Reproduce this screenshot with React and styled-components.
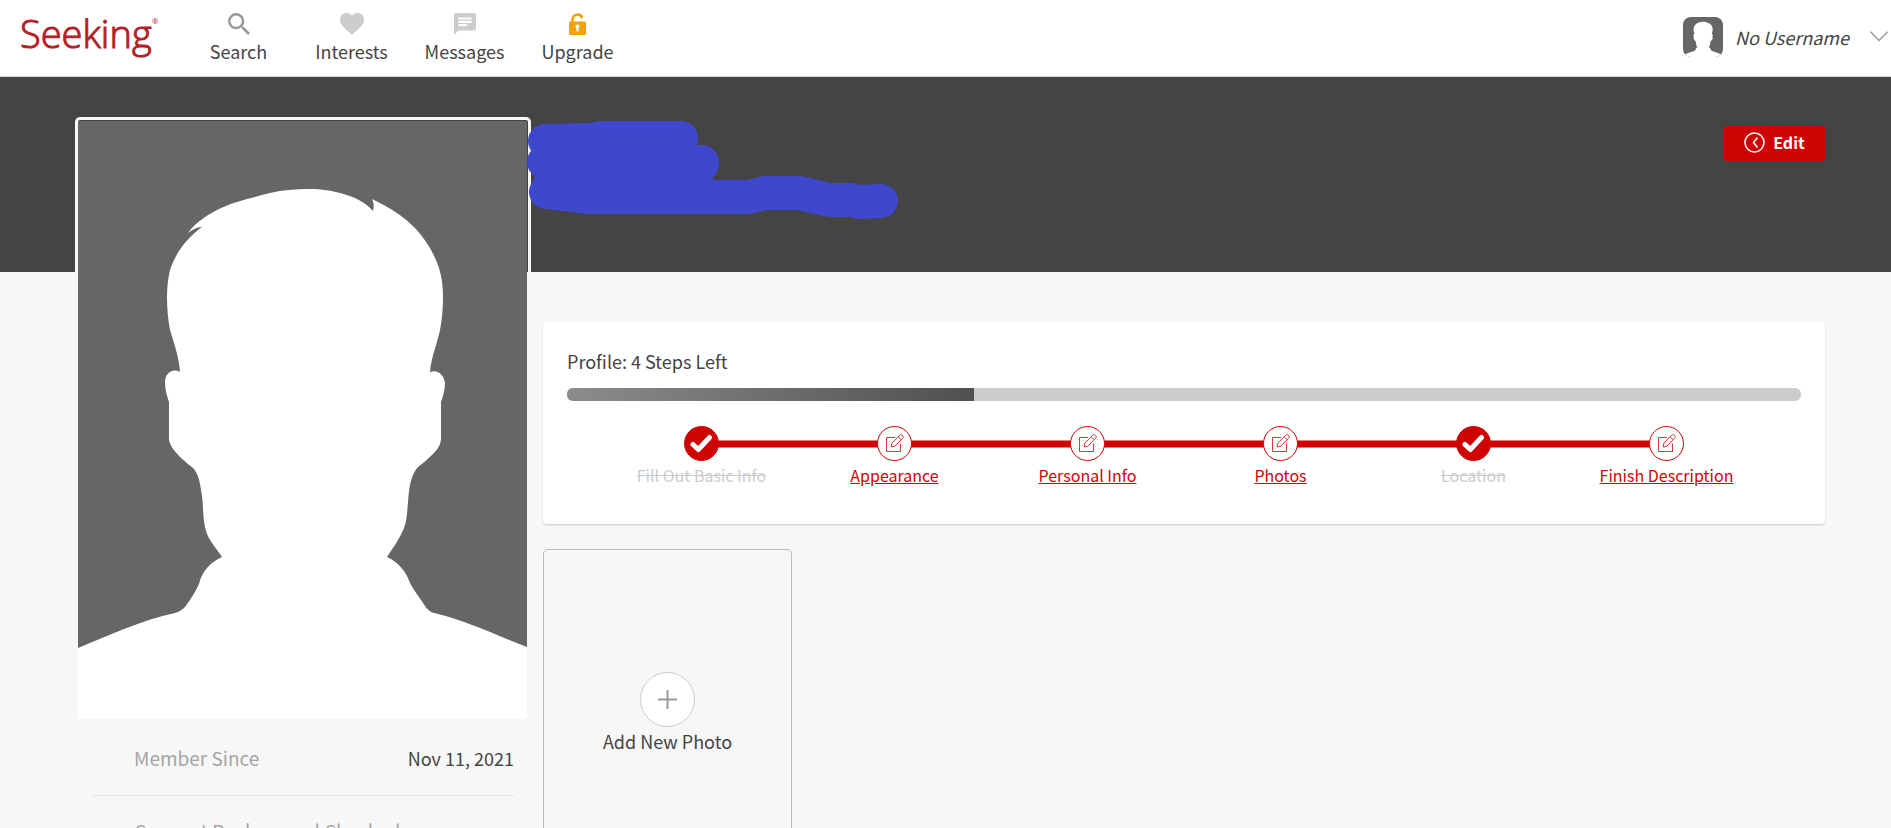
import styled, { createGlobalStyle, css } from "styled-components";

const GlobalStyle = createGlobalStyle`
  * {
    box-sizing: border-box;
  }
  body {
    margin: 0;
    background-color: #f7f7f7;
    color: #444;
    font-family: "Noto Sans CJK SC", sans-serif;
    font-size: 18px;
    line-height: 24px;
  }
`;

const StyledHeader = styled.header`
  display: flex;
  align-items: center;
  height: 77px;
  padding: 0 3px 0 20px;
  background-color: #fff;
  border-bottom: 1px solid #d4d8d8;
`;

const Logo = styled.a`
  display: flex;
  align-items: flex-start;
  width: 162px;
  padding-bottom: 10px;
  color: #b32025;
  font-family: "Open Sans", sans-serif;
  font-size: 38px;
  font-weight: 300;
  line-height: 56px;
  text-decoration: none;
  -webkit-text-stroke: 1px #b32025;
`;

const Registered = styled.span`
  font-size: 8px;
  font-weight: 400;
  line-height: 16px;
  padding-top: 8px;
  -webkit-text-stroke: 0;
`;

const StyledNav = styled.nav`
  display: flex;
`;

const NavLink = styled.a`
  display: flex;
  flex-direction: column;
  align-items: center;
  gap: 4px;
  width: 113px;
  color: #444;
  text-decoration: none;
`;

const UserLink = styled.a`
  display: flex;
  align-items: center;
  gap: 12px;
  margin-left: auto;
  padding-bottom: 3px;
  color: #444;
  font-style: italic;
  text-decoration: none;
`;

const UserAvatar = styled.span`
  display: flex;
  width: 40px;
  height: 40px;
  border-radius: 8px;
  overflow: hidden;
`;

const UserChevron = styled.span`
  display: flex;
  margin-left: 9px;
`;

const Banner = styled.section`
  display: flex;
  align-items: flex-start;
  justify-content: space-between;
  height: 195px;
  padding: 49px 66px 0 543px;
  background-color: #444;
`;

const ProfileName = styled.div`
  position: relative;
`;

const NameCover = styled.svg`
  position: absolute;
  z-index: 2;
  top: -6px;
  left: -17px;
`;

const EditButton = styled.button`
  display: flex;
  align-items: center;
  justify-content: center;
  gap: 8px;
  width: 101px;
  height: 35px;
  padding: 0 0 3px;
  border: 0;
  border-radius: 2px;
  background-color: #ce0404;
  color: #fff;
  font-family: inherit;
  font-size: 16px;
  font-weight: 700;
  line-height: 24px;
`;

const Main = styled.main`
  display: grid;
  grid-template-columns: 456px minmax(0, 1fr);
  gap: 12px;
  padding: 0 66px 0 75px;
`;

const Sidebar = styled.aside`
  position: relative;
  margin-top: -155px;
`;

const PhotoFrame = styled.div`
  border: 3px solid #f7f7f7;
  border-radius: 5px;
  padding: 1px 1px 0 0;

  svg {
    display: block;
    width: 100%;
  }
`;

const Facts = styled.table`
  width: 426px;
  margin: 1px 0 0 15px;
  border-spacing: 2px;
`;

const FactCell = styled.td`
  height: 71px;
  padding: 0 0 4px;
  border-bottom: 1px solid #e5e5e5;
  text-align: right;
  width: ${(props) => props.$width};
`;

const FactLabel = styled.th`
  padding: 0 0 4px;
  border-bottom: 1px solid #e5e5e5;
  color: #a5a5a5;
  font-size: 19px;
  font-weight: 400;
  text-align: left;
`;

const Content = styled.div`
  padding-top: 50px;
`;

const ProgressCard = styled.section`
  padding: 27px 24px 37px;
  background-color: #fff;
  border-radius: 4px;
  box-shadow: 0 1px 2px rgba(0, 0, 0, 0.2);
`;

const ProgressTitle = styled.h2`
  margin: 0 0 15px;
  font-size: 18px;
  font-weight: 400;
  line-height: 24px;
`;

const ProgressTrack = styled.div`
  height: 13px;
  border-radius: 6px;
  background-color: #ccc;
  overflow: hidden;
`;

const ProgressFill = styled.div`
  height: 100%;
  background: linear-gradient(to right, #8c8c8c, #505050);
`;

const StepList = styled.ol`
  display: grid;
  grid-template-columns: repeat(6, 1fr);
  margin: 25px 38px 0;
  padding: 0;
  list-style: none;
`;

const Step = styled.li`
  position: relative;
  display: flex;
  flex-direction: column;
  align-items: center;
  gap: 2px;

  & + &::before {
    content: "";
    position: absolute;
    top: 14px;
    right: 50%;
    width: 100%;
    height: 6px;
    border: solid #e77f7f;
    border-width: 1px 0;
    background-color: #ce0404;
    background-clip: padding-box;
  }
`;

const StepMark = styled.span`
  position: relative;
  z-index: 1;
  display: flex;
  align-items: center;
  justify-content: center;
  width: 35px;
  height: 35px;
  border: 1px solid #ce0404;
  border-radius: 50%;
  background-color: ${(props) => (props.$done ? "#ce0404" : "#fff")};
`;

const stepText = css`
  font-size: 16px;
  line-height: 24px;
`;

const StepLink = styled.a`
  ${stepText}
  color: #ce0404;
  text-decoration: underline;
`;

const StepDone = styled.s`
  ${stepText}
  color: #ccc;
`;

const AddPhoto = styled.button`
  display: flex;
  flex-direction: column;
  align-items: center;
  justify-content: center;
  gap: 2px;
  width: 249px;
  height: 332px;
  margin-top: 25px;
  padding: 0 0 6px;
  border: 1px solid #bbb;
  border-radius: 5px;
  background: none;
  color: #444;
  font-family: inherit;
  font-size: 18px;
  line-height: 24px;
`;

const PlusCircle = styled.span`
  display: flex;
  align-items: center;
  justify-content: center;
  width: 55px;
  height: 55px;
  border: 1px solid #ccc;
  border-radius: 50%;
  background-color: #fff;
`;

const silhouette =
  "M110 112C118 101 128 95 139 89C156 80 174 77 192 72C205 69 217 68 231 68C244 68 254 70 262 72C276 76 286 80 295 90C296 86 296 82 294 78" +
  "C313 87 326 96 337 107C348 119 356 132 361 147C364 157 365 166 365 176C365 188 364 199 362 209C359 224 353 236 352 251" +
  "C360 248 366 254 367 262C367 269 365 275 363 281V319C362 325 359 329 355 333C350 338 345 342 340 346" +
  "C332 355 331 369 330 381C329 392 329 399 326 407C322 417 315 427 309 436C320 441 328 450 332 462C336 470 342 477 347 485" +
  "C349 488 352 491 356 492C389 500 418 514 449 526L520 555V700H-70V555L0 527C32 514 64 499 97 492C101 491 104 489 107 486" +
  "C112 479 117 472 121 463C124 450 133 441 144 436C139 428 131 420 128 410C124 396 126 383 123 369C122 361 120 352 115 347" +
  "C108 341 93 330 91 319V281C89 275 87 269 87 261C87 252 95 247 102 251C101 236 96 222 92 209C90 199 89 187 89 176" +
  "C89 166 90 158 92 149C98 131 109 117 124 106C119 106 114 109 110 112Z";

function Silhouette({ viewBox, label }) {
  return (
    <svg viewBox={viewBox} role="img" aria-label={label}>
      <rect x="-80" width="620" height="640" fill="#666" />
      <path d={silhouette} fill="#fff" />
    </svg>
  );
}

function SearchIcon() {
  return (
    <svg width="22" height="22" viewBox="3 3 17.5 17.5" fill="#999">
      <path d="M15.5 14h-.79l-.28-.27A6.47 6.47 0 0 0 16 9.5 6.5 6.5 0 1 0 9.5 16c1.61 0 3.09-.59 4.23-1.57l.27.28v.79l5 4.99L20.49 19l-4.99-5zm-6 0a4.5 4.5 0 1 1 0-9 4.5 4.5 0 0 1 0 9z" />
    </svg>
  );
}

function HeartIcon() {
  return (
    <svg width="24" height="22" viewBox="0 0 24 22" fill="#ccc">
      <path d="M12 22C9 18 0 13.500 0 6.700C0 2.500 3 0 6.500 0C9 0 11 1 12 3C13 1 15 0 17.500 0C21 0 24 2.500 24 6.700C24 13.500 15 18 12 22Z" />
    </svg>
  );
}

function MessageIcon() {
  return (
    <svg width="22" height="22" viewBox="2 2 20 20" fill="#ccc">
      <path d="M20 2H4c-1.1 0-1.99.9-1.99 2L2 22l4-4h14c1.1 0 2-.9 2-2V4c0-1.1-.9-2-2-2zM6 9h12v2H6V9zm8 5H6v-2h8v2zm4-6H6V6h12v2z" />
    </svg>
  );
}

function LockIcon() {
  return (
    <svg width="17" height="22" viewBox="0 0 17 22">
      <path d="M3.500 9V6.500A5 5 0 0 1 13.200 5" fill="none" stroke="#f0a202" strokeWidth="2.600" />
      <rect y="8.500" width="17" height="13.500" rx="1" fill="#f0a202" />
      <circle cx="8.500" cy="13.500" r="2" fill="#fff" />
      <path d="M7.500 14h2v4.500h-2z" fill="#fff" />
    </svg>
  );
}

function CheckIcon() {
  return (
    <svg width="23" height="19" viewBox="0 0 23 19">
      <path d="M3 10.500L8.300 15.500L19.500 3.500" fill="none" stroke="#fff" strokeWidth="5" strokeLinecap="round" strokeLinejoin="round" />
    </svg>
  );
}

function PencilIcon() {
  return (
    <svg width="18" height="20" viewBox="0 0 18 20" fill="none" stroke="#ce0404" strokeOpacity="0.8">
      <path d="M9 3.500H.500V17.500H14.500V9.500" />
      <path d="M5 13L5.800 9.200L13.600 1.200C14.400 .400 15.400 .500 16.300 1.300C17.400 2.200 17.500 3.300 16.700 4.200L8.800 12.200Z" />
      <path d="M12.200 2.800L15.200 5.600" />
    </svg>
  );
}

const navItems = [
  { label: "Search", Icon: SearchIcon },
  { label: "Interests", Icon: HeartIcon },
  { label: "Messages", Icon: MessageIcon },
  { label: "Upgrade", Icon: LockIcon },
];

const steps = [
  { label: "Fill Out Basic Info", done: true },
  { label: "Appearance" },
  { label: "Personal Info" },
  { label: "Photos" },
  { label: "Location", done: true },
  { label: "Finish Description" },
];

const facts = [
  { label: "Member Since", value: "Nov 11, 2021" },
  { label: "Connect Background Checked", value: "" },
];

function Header() {
  return (
    <StyledHeader>
      <Logo href="#">
        Seeking<Registered>®</Registered>
      </Logo>
      <StyledNav>
        {navItems.map(({ label, Icon }) => (
          <NavLink key={label} href="#">
            <Icon />
            {label}
          </NavLink>
        ))}
      </StyledNav>
      <UserLink href="#">
        <UserAvatar>
          <Silhouette viewBox="-65 0 580 580" label="Your photo" />
        </UserAvatar>
        No Username
        <UserChevron>
          <svg width="18" height="11" viewBox="0 0 18 11" fill="none" stroke="#999" strokeWidth="1.500">
            <path d="M.500 .700L9 9.500L17.500 .700" />
          </svg>
        </UserChevron>
      </UserLink>
    </StyledHeader>
  );
}

function ProfileProgress({ percent }) {
  return (
    <ProgressCard>
      <ProgressTitle>Profile: 4 Steps Left</ProgressTitle>
      <ProgressTrack>
        <ProgressFill style={{ width: `${percent}%` }} />
      </ProgressTrack>
      <StepList>
        {steps.map(({ label, done }) => (
          <Step key={label}>
            <StepMark $done={done}>{done ? <CheckIcon /> : <PencilIcon />}</StepMark>
            {done ? <StepDone>{label}</StepDone> : <StepLink href="#">{label}</StepLink>}
          </Step>
        ))}
      </StepList>
    </ProgressCard>
  );
}

export default function App() {
  return (
    <>
      <GlobalStyle />
      <Header />
      <Banner>
        <ProfileName>
          <NameCover width="374" height="100" viewBox="0 0 374 100" fill="none" stroke="#3f48cc" strokeWidth="34" strokeLinecap="round" strokeLinejoin="round">
            <path d="M19 21L66 20L76 18L155 18M18 42H176V44" />
            <path d="M20 72L61 77H222L239 73H274L290 77L304 80H325L334 82L355 81" />
            <path d="M25 32H155M25 60H170" />
          </NameCover>
        </ProfileName>
        <EditButton type="button">
          <svg width="21" height="21" viewBox="0 0 21 21" fill="none" stroke="#fff" strokeWidth="1.600">
            <circle cx="10.500" cy="10.500" r="9.500" />
            <path d="M13.500 5.500L9.500 10.500L13.500 15.500" />
          </svg>
          Edit
        </EditButton>
      </Banner>
      <Main>
        <Sidebar>
          <PhotoFrame>
            <Silhouette viewBox="0 0 449 598" label="Profile photo" />
          </PhotoFrame>
          <Facts>
            <tbody>
              {facts.map(({ label, value }) => (
                <tr key={label}>
                  <FactCell $width="40px" />
                  <FactLabel scope="row">{label}</FactLabel>
                  <FactCell $width="109px">{value}</FactCell>
                </tr>
              ))}
            </tbody>
          </Facts>
        </Sidebar>
        <Content>
          <ProfileProgress percent={33} />
          <AddPhoto type="button">
            <PlusCircle>
              <svg width="19" height="19" viewBox="0 0 19 19" stroke="#999" strokeWidth="2">
                <path d="M9.500 0V19M0 9.500H19" />
              </svg>
            </PlusCircle>
            Add New Photo
          </AddPhoto>
        </Content>
      </Main>
    </>
  );
}
